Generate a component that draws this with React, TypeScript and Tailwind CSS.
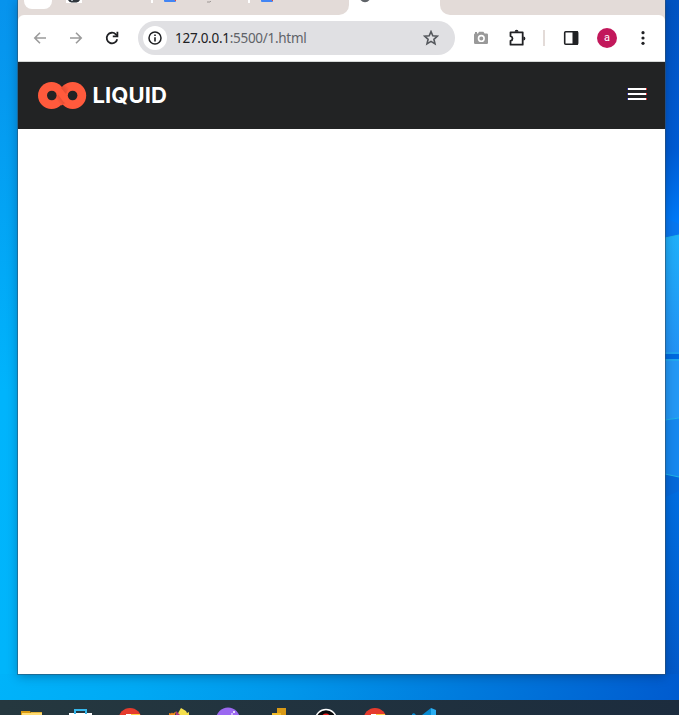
import React from 'react';

function TabStrip() {
  return (
    <div className="flex h-[15px] shrink-0 items-start bg-[#e3dbd8]">
      <div className="ml-[6px] h-[9px] w-[28px] rounded-b-[8px] bg-white" />
      <svg className="ml-[14px]" width="16" height="3" viewBox="0 0 16 3">
        <path fill="#fff" d="M0 0h16v3H0z" />
        <path fill="#30363d" d="M2 0h12q-1 2-3.500 2.500h-5Q3 2 2 0" />
        <path fill="#aab2ba" d="M5 0h2v1H5z" />
      </svg>
      <div className="ml-[69px] h-[3px] w-[2px] bg-white" />
      <DocTab />
      <svg className="ml-[30px]" width="8" height="3" viewBox="0 0 8 3">
        <path d="M1 2h3l1-1" stroke="#8d8886" fill="none" strokeWidth=".8" />
      </svg>
      <div className="ml-[34px] h-[3px] w-[2px] bg-white" />
      <DocTab />
      <div className="ml-auto flex h-[15px] w-[334px] bg-white">
        <div className="h-[15px] w-[18px] rounded-br-[10px] bg-[#e3dbd8]" />
        <div className="flex w-[91px] pl-[10px]">
          <svg width="12" height="3" viewBox="0 0 12 3">
            <path d="M1.500 0h9Q8.500 2.200 6 2.200T1.500 0" fill="#5f6368" />
          </svg>
        </div>
        <div className="flex-1 bg-white">
          <div className="h-[15px] rounded-bl-[10px] bg-[#e3dbd8]" />
        </div>
      </div>
    </div>
  );
}

function DocTab() {
  return (
    <div className="ml-[11px] flex h-[2px] w-[12px] overflow-hidden rounded-b-[1px] bg-[#4285f4]">
      <div className="ml-auto h-px w-px bg-[#ea4335]" />
    </div>
  );
}

function Toolbar() {
  return (
    <div className="h-[46px] shrink-0 bg-[#e3dbd8]">
      <div className="flex h-[46px] items-center rounded-t-[6px] bg-white">
        <svg className="ml-[15px]" width="14" height="14" viewBox="0 0 14 14" fill="none" stroke="#9b9b9b" strokeWidth="1.600">
          <path d="M13 7H2M7 1.800 1.800 7 7 12.200" />
        </svg>
        <svg className="ml-[22px]" width="14" height="14" viewBox="0 0 14 14" fill="none" stroke="#9b9b9b" strokeWidth="1.600">
          <path d="M1 7h11M7 1.800 12.200 7 7 12.200" />
        </svg>
        <svg className="ml-[22px]" width="14" height="14" viewBox="0 0 14 14" fill="none" stroke="#202124" strokeWidth="1.800">
          <path d="M12.200 8.200A5.300 5.300 0 1 1 10.800 3.300L12.200 4.700" />
          <path d="M12.400.8v4.600H7.800" />
        </svg>
        <div className="ml-[19px] flex h-[34px] w-[317px] items-center rounded-full bg-[#e0e0e3]">
          <div className="ml-[5px] flex size-6 items-center justify-center rounded-full bg-white">
            <svg width="14" height="14" viewBox="0 0 14 14">
              <circle cx="7" cy="7" r="6" fill="none" stroke="#202124" strokeWidth="1.500" />
              <path d="M6.200 3.400h1.600V5H6.200zM6.200 6.200h1.600v4.300H6.200z" fill="#202124" />
            </svg>
          </div>
          <div className="ml-[8px] w-[140px] whitespace-nowrap font-['Noto_Sans',sans-serif] text-[13.5px] leading-[20px] tracking-[-0.280px] text-[#202124]">
            127.0.0.1<span className="text-[#606368]">:5500/1.html</span>
          </div>
          <svg className="ml-auto mr-[16px]" width="16" height="16" viewBox="0 0 16 16" fill="none" stroke="#55585d" strokeWidth="1.600">
            <path d="m8 1.600 1.800 4.200 4.600.4-3.500 3.100 1.100 4.600L8 11.400l-4 2.500 1.100-4.600-3.500-3.100 4.600-.4z" />
          </svg>
        </div>
        <svg className="ml-[18px]" width="16" height="16" viewBox="0 0 16 16">
          <path fill="#999" d="M2.200 3.500H5l1-1.800h4.400l1.200 1.800h2.200q1.200 0 1.200 1.200v8.100q0 1.200-1.200 1.200H2.200Q1 14 1 12.800V4.700q0-1.200 1.200-1.200M2 2h2v1.500H2z" />
          <circle cx="8.300" cy="8.400" r="2.800" fill="#999" stroke="#fff" strokeWidth="1.600" />
        </svg>
        <svg className="ml-[19px]" width="19" height="18" viewBox="0 0 19 18">
          <path fill="none" stroke="#202124" strokeWidth="1.800" strokeLinejoin="round" d="M2.500 3.300h12.200v12.400H2.500v-3.900q2-.5 2-2.300t-2-2.300z" />
          <path fill="#202124" d="M6.700 2.700a1.900 1.900 0 0 1 3.800 0zM15.400 7.500a2 2 0 0 1 0 4z" />
        </svg>
        <div className="ml-[16px] h-4 w-[2px] bg-[#e3dbd8]" />
        <svg className="ml-[18px]" width="16" height="16" viewBox="0 0 16 16">
          <rect x="1.700" y="1.800" width="12.800" height="12.500" rx="1" fill="none" stroke="#202124" strokeWidth="1.600" />
          <path fill="#202124" d="M9.500 1h4.700q1 0 1 1v12q0 1-1 1H9.500z" />
        </svg>
        <div className="ml-[18px] flex size-5 items-center justify-center rounded-full bg-[#c2185b] pb-px font-['Roboto',sans-serif] text-[11px] leading-none text-white">a</div>
        <svg className="ml-[22px]" width="8" height="16" viewBox="0 0 8 16" fill="#202124">
          <circle cx="4" cy="2.700" r="1.600" />
          <circle cx="4" cy="8" r="1.600" />
          <circle cx="4" cy="13.300" r="1.600" />
        </svg>
      </div>
    </div>
  );
}

function SiteHeader() {
  return (
    <header className="flex h-[68px] shrink-0 items-center border-t border-[#d5d8d7] bg-[#222324] pl-[20px] pr-[18px]">
      <svg width="49" height="27" viewBox="0 0 49 27">
        <defs>
          <linearGradient id="fold" gradientUnits="userSpaceOnUse" x1="24.500" y1="13" x2="18" y2="17.500">
            <stop offset="0" stopColor="#d3462f" />
            <stop offset="1" stopColor="#ff5a3c" />
          </linearGradient>
          <linearGradient id="foldTop" gradientUnits="userSpaceOnUse" x1="25.500" y1="9" x2="31" y2="5">
            <stop offset="0" stopColor="#e54d33" />
            <stop offset="1" stopColor="#ff5a3c" />
          </linearGradient>
        </defs>
        <circle cx="13.500" cy="13.500" r="13.500" fill="#ff5a3c" />
        <circle cx="34.700" cy="13.500" r="13.500" fill="#ff5a3c" />
        <path d="m17.500 17 5-8 7 10.500-6 4z" fill="url(#fold)" />
        <path d="M17 3.500q4 1 7 5.500l9 13q-5 1.500-9-4L14.500 5z" fill="#ff5a3c" />
        <path d="m23 6 3-3 5 3-3 6z" fill="url(#foldTop)" />
        <circle cx="13.800" cy="13.500" r="4.800" fill="#222324" />
        <circle cx="34.600" cy="13.500" r="4.800" fill="#222324" />
      </svg>
      <span className="-mt-[2px] ml-[5.500px] w-[80px] whitespace-nowrap font-['Inter',sans-serif] text-[22px] font-bold leading-[28px] tracking-[0.100px] text-white">LIQUID</span>
      <div className="-mt-[3px] ml-auto flex w-[20px] flex-col gap-[3px]">
        {[0, 1, 2].map((i) => (
          <div key={i} className="h-[2px] border-l border-r border-l-[#3030a0] border-r-[#e23333] bg-white" />
        ))}
      </div>
    </header>
  );
}

function Taskbar() {
  return (
    <div className="relative z-20 h-[15px] shrink-0 bg-linear-to-r from-[#25383f] to-[#1c2c3e]">
      <svg className="block" width="679" height="15" viewBox="0 0 679 15">
        <path fill="#d99a10" d="M21 11h9l1 2h11v2H21z" />
        <path fill="#ffdc72" d="M22 13h20v2H22z" />
        <path fill="#e6b53b" d="M31 12h11v1H31z" />
        <path fill="#fff" d="M69 13h23v2H69z" />
        <path fill="none" stroke="#36b8ed" strokeWidth="2" d="M75 14v-4h11v4" />
        <circle cx="130" cy="19.500" r="11.500" fill="#e53b2d" />
        <path fill="#ffcf48" d="M131 14h9v1h-9z" />
        <path fill="#fff" d="M126 14h5v1h-5z" />
        <path fill="#f38b1c" d="m169 13 2 .5 1-1 1 1 3-2-1 3.500h-6z" />
        <path fill="#f4df4b" d="m181 8 5 3 1 2 2-1v3h-12z" />
        <path fill="#ab3678" d="m176 11 4 4h-4z" />
        <circle cx="228" cy="19.500" r="12" fill="#9b68f1" />
        <path fill="none" stroke="#fff" strokeWidth="1" d="m231 14 2 0m1-3v2m-1-1h2" />
        <path fill="#d99a16" d="M277 8h9v7h-9z" />
        <path fill="#f1bc2b" d="M272 13h9v2h-9z" />
        <circle cx="326" cy="20" r="10.500" fill="#08090b" stroke="#fff" strokeWidth="1.500" />
        <circle cx="326" cy="18" r="4.500" fill="#ed201f" />
        <circle cx="375" cy="19.500" r="11.500" fill="#e53b2d" />
        <path fill="#ffcf48" d="M375 14h10v1h-10z" />
        <path fill="#fff" d="M371 14h5v1h-5z" />
        <path fill="#078ad1" d="m422 15 9-7v7h-9z" />
        <path fill="#2baef2" d="m431 8 5 2v5h-5z" />
        <path fill="#078ad1" d="m412 14 2-1 2 2h-4z" />
      </svg>
    </div>
  );
}

export default function App() {
  return (
    <div className="flex h-[715px] w-[679px] flex-col overflow-hidden">
      <div className="flex h-[674px] shrink-0">
        <div className="w-[18px] shrink-0 bg-[linear-gradient(180deg,#0793ed_0%,#0599ef_14%,#00b4fc_58%,#00b5fb_100%)]" />
        <main className="relative z-10 flex w-[647px] shrink-0 flex-col bg-white shadow-[0_0_0_1px_rgba(50,80,105,0.550),0_2px_10px_rgba(0,20,45,0.350)]">
          <TabStrip />
          <Toolbar />
          <SiteHeader />
          <div className="flex-1 bg-white" />
        </main>
        <svg className="shrink-0" width="14" height="674" viewBox="0 0 14 674">
          <defs>
            <linearGradient id="sky" x1="0" y1="0" x2="0" y2="1">
              <stop offset="0" stopColor="#0254c2" />
              <stop offset=".22" stopColor="#005bd3" />
              <stop offset=".35" stopColor="#0080ff" />
              <stop offset=".74" stopColor="#006de0" />
              <stop offset="1" stopColor="#035ac9" />
            </linearGradient>
            <linearGradient id="pane" x1="0" y1="0" x2="0" y2="1">
              <stop offset="0" stopColor="#1fb0fa" />
              <stop offset="1" stopColor="#2392f5" />
            </linearGradient>
          </defs>
          <path fill="url(#sky)" d="M0 0h14v674H0z" />
          <path fill="#0877ef" d="m0 218 14 6v14H0z" />
          <path fill="url(#pane)" d="m0 238 14-3v119H0z" />
          <path fill="#006ae0" d="M0 354h14v5H0z" />
          <path fill="#2398f5" d="M0 359h14v59l-14 2z" />
          <path fill="#1688ef" d="m0 420 14-2v59l-14-3z" />
          <path fill="#0569da" d="m0 474 14 3v14l-14 6z" />
          <path d="m0 238 14-3M0 353h14M0 360h14M0 420l14-2M0 474l14 3" stroke="#20b5e9" strokeWidth="1" />
        </svg>
      </div>
      <div className="h-[26px] shrink-0 bg-[linear-gradient(100deg,#00b3fa_0%,#00a9f4_20%,#0196ea_43%,#007bdd_68%,#005bcf_100%)]" />
      <Taskbar />
    </div>
  );
}
